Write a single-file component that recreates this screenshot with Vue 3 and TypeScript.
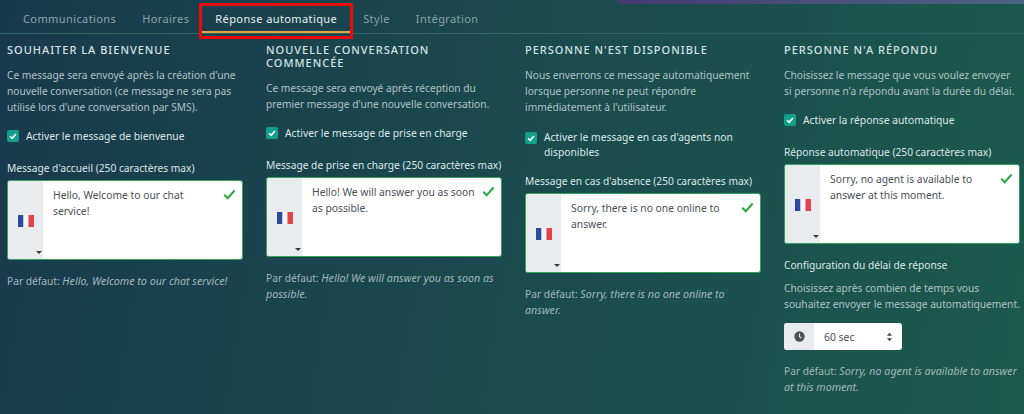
<script setup lang="ts">
interface Col {
  title: string
  desc: string
  check: string
  label: string
  msg: string
  def: string
  delay?: boolean
}
const tabs = ['Communications', 'Horaires', 'Réponse automatique', 'Style', 'Intégration']
const cols: Col[] = [
  {
    title: 'Souhaiter la bienvenue',
    desc: "Ce message sera envoyé après la création d'une nouvelle conversation (ce message ne sera pas utilisé lors d'une conversation par SMS).",
    check: 'Activer le message de bienvenue',
    label: "Message d'accueil (250 caractères max)",
    msg: 'Hello, Welcome to our chat service!',
    def: 'Hello, Welcome to our chat service!',
  },
  {
    title: 'Nouvelle conversation commencée',
    desc: "Ce message sera envoyé après réception du premier message d'une nouvelle conversation.",
    check: 'Activer le message de prise en charge',
    label: 'Message de prise en charge (250 caractères max)',
    msg: 'Hello! We will answer you as soon as possible.',
    def: 'Hello! We will answer you as soon as possible.',
  },
  {
    title: "Personne n'est disponible",
    desc: "Nous enverrons ce message automatiquement lorsque personne ne peut répondre immédiatement à l'utilisateur.",
    check: "Activer le message en cas d'agents non disponibles",
    label: "Message en cas d'absence (250 caractères max)",
    msg: 'Sorry, there is no one online to answer.',
    def: 'Sorry, there is no one online to answer.',
  },
  {
    title: "Personne n'a répondu",
    desc: "Choisissez le message que vous voulez envoyer si personne n'a répondu avant la durée du délai.",
    check: 'Activer la réponse automatique',
    label: 'Réponse automatique (250 caractères max)',
    msg: 'Sorry, no agent is available to answer at this moment.',
    def: 'Sorry, no agent is available to answer at this moment.',
    delay: true,
  },
]
</script>

<template>
  <div class="page">
    <div class="strip"></div>
    <nav class="tabs">
      <span v-for="t in tabs" :key="t" class="tab" :class="{ active: t === 'Réponse automatique' }">{{ t }}</span>
    </nav>
    <main class="cols">
      <section v-for="c in cols" :key="c.title" class="col">
        <h3>{{ c.title }}</h3>
        <p class="desc">{{ c.desc }}</p>
        <div class="check">
          <span class="box">
            <svg viewBox="0 0 12 12" width="10" height="10"><path d="M2.5 6.3 5 8.7 9.5 3.6" fill="none" stroke="#fff" stroke-width="2" /></svg>
          </span>
          <span>{{ c.check }}</span>
        </div>
        <div class="label">{{ c.label }}</div>
        <div class="field">
          <div class="flag-side">
            <svg class="flag" viewBox="0 0 16 12" width="16" height="12">
              <rect width="5.5" height="12" fill="#2a4a9c" />
              <rect x="5.5" width="5" height="12" fill="#f4f5f8" />
              <rect x="10.5" width="5.5" height="12" fill="#e0434c" />
            </svg>
            <span class="caret"></span>
          </div>
          <div class="msg">{{ c.msg }}</div>
          <svg class="ok" viewBox="0 0 14 12" width="13" height="11"><path d="M1.3 6.3 5 10 12.6 1.6" fill="none" stroke="#28a745" stroke-width="2.2" /></svg>
        </div>
        <template v-if="c.delay">
          <div class="label delay-title">Configuration du délai de réponse</div>
          <p class="desc delay-desc">Choisissez après combien de temps vous souhaitez envoyer le message automatiquement.</p>
          <div class="select">
            <span class="clock">
              <svg viewBox="0 0 12 12" width="11" height="11">
                <circle cx="6" cy="6" r="5.6" fill="#49505a" />
                <path d="M6 2.8V6.3L8.2 7.6" fill="none" stroke="#e9ecef" stroke-width="1.2" />
              </svg>
            </span>
            <span class="sel-val">60 sec</span>
            <svg class="updown" viewBox="0 0 8 12" width="7" height="10"><path d="M4 1 7 4.6H1ZM4 11 1 7.4H7Z" fill="#3d434a" /></svg>
          </div>
        </template>
        <p class="def">Par défaut: <em>{{ c.def }}</em></p>
      </section>
    </main>
  </div>
</template>

<style>
html, body { margin: 0; padding: 0; }
</style>

<style scoped>
.page {
  position: relative;
  width: 1024px;
  height: 414px;
  overflow: hidden;
  box-sizing: border-box;
  font-family: "Noto Sans", "Open Sans", sans-serif;
  background: linear-gradient(100deg, #193a4d 0%, #1a4a4e 50%, #1c5a4d 100%);
  color: #c4d2d4;
}
.strip {
  position: absolute;
  top: 0;
  right: 0;
  width: 407px;
  height: 4px;
  border-bottom-left-radius: 5px;
  background: linear-gradient(90deg, #453a72, #4d6484);
}
.tabs {
  display: flex;
  height: 34px;
  box-sizing: border-box;
  padding-left: 10px;
  border-bottom: 1px solid #2f6464;
  font-size: 11px;
  letter-spacing: 0.4px;
}
.tab {
  position: relative;
  padding: 11px 13px 0;
  line-height: 16px;
  color: #8ba3a8;
  white-space: nowrap;
}
.tab.active {
  color: #e8eeee;
  height: 33px;
  box-sizing: border-box;
  border-bottom: 2px solid #e8a33d;
}
.tab.active::after {
  content: "";
  position: absolute;
  left: -3px;
  right: -3px;
  top: 3px;
  bottom: -8px;
  border: 3px solid #ea0a0a;
}
.cols {
  display: grid;
  grid-template-columns: repeat(4, 259px);
}
.col {
  padding: 9px 16px 0 7px;
  font-size: 10.2px;
  line-height: 16px;
}
h3 {
  margin: 0;
  font-size: 11px;
  line-height: 13px;
  font-weight: 500;
  letter-spacing: 1px;
  text-transform: uppercase;
  color: #d5e2e3;
}
.desc {
  margin: 11px 0 0;
  color: #b1c2c4;
}
.check {
  display: flex;
  gap: 7px;
  margin-top: 13px;
  color: #dde6e6;
  font-size: 10.3px;
}
.col:nth-child(3) .check {
  margin-top: 15px;
  margin-bottom: -3px;
  line-height: 15px;
}
.box {
  flex: none;
  width: 12px;
  height: 12px;
  margin-top: 2px;
  border-radius: 2px;
  background: #13a08b;
  display: flex;
  align-items: center;
  justify-content: center;
}
.label {
  margin-top: 16px;
  color: #dde6e6;
}
.field {
  position: relative;
  display: flex;
  height: 80px;
  margin-top: 4px;
  background: #fff;
  border: 1px solid #36a35a;
  border-radius: 3px;
  box-sizing: border-box;
  overflow: hidden;
}
.flag-side {
  position: relative;
  flex: none;
  width: 35px;
  background: #e9ecef;
  display: flex;
  align-items: center;
  justify-content: center;
}
.flag { margin-top: 2px; }
.caret {
  position: absolute;
  right: 1px;
  bottom: 5px;
  border: 3px solid transparent;
  border-top: 3px solid #343a40;
  border-bottom: 0;
}
.msg {
  padding: 6px 22px 0 10px;
  color: #495057;
  font-size: 10.3px;
}
.ok {
  position: absolute;
  right: 6px;
  top: 8px;
}
.delay-title { margin-top: 13px; }
.delay-desc { margin-top: 7px; }
.select {
  display: flex;
  align-items: center;
  width: 118px;
  height: 27px;
  margin-top: 11px;
  background: #fff;
  border-radius: 3px;
  overflow: hidden;
  font-size: 10.4px;
  color: #495057;
}
.clock {
  width: 30px;
  height: 100%;
  background: #e9ecef;
  display: flex;
  align-items: center;
  justify-content: center;
}
.sel-val { margin-left: 10px; flex: 1; }
.updown { margin-right: 9px; }
.def {
  margin: 13px 0 0;
  color: #a3b6b9;
}
.def em { font-size: 10.7px; line-height: 14px; }
.select + .def { margin-top: 13px; }
</style>
